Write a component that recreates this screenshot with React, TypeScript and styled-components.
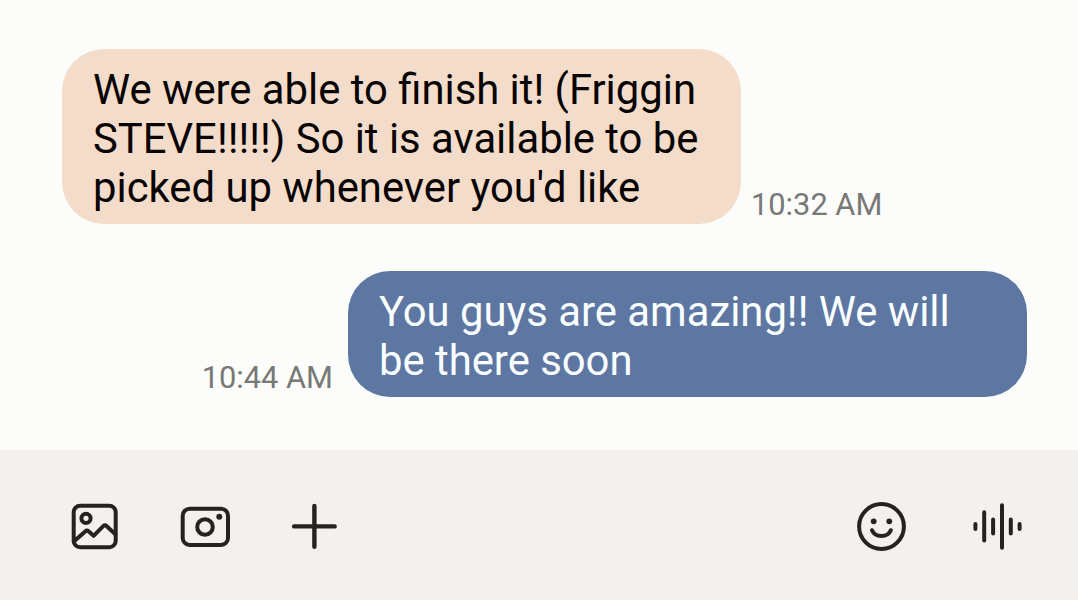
import styled, { createGlobalStyle } from 'styled-components';

type TypeMessage = {
  text: string;
  time: string;
  mine: boolean;
};

const messages: TypeMessage[] = [
  {
    text: "We were able to finish it! (Friggin STEVE!!!!!) So it is available to be picked up whenever you'd like",
    time: '10:32 AM',
    mine: false,
  },
  {
    text: 'You guys are amazing!! We will be there soon',
    time: '10:44 AM',
    mine: true,
  },
];

const ImageIcon = () => (
  <Icon viewBox="0 0 55 55">
    <rect x="6.7" y="7.7" width="42" height="41.6" rx="6.5" />
    <circle cx="19" cy="20.3" r="4.6" />
    <path d="M6.8 43.6 L18.2 33.4 Q20 31.8 21.8 33.4 L26.6 37.8 L36.2 28.2 Q38 26.4 39.8 28.2 L48.4 36.4" />
  </Icon>
);

const CameraIcon = () => (
  <Icon viewBox="0 0 55 55">
    <rect x="5.7" y="10.7" width="45.3" height="36.3" rx="7" />
    <circle cx="28" cy="29" r="7.8" />
    <Dot cx="42.3" cy="18.7" r="3" />
  </Icon>
);

const PlusIcon = () => (
  <Icon viewBox="0 0 55 55">
    <path d="M27.4 8 V48.8 M7.1 28.4 H47.7" strokeWidth="4.4" />
  </Icon>
);

const SmileIcon = () => (
  <Icon viewBox="0 0 55 55">
    <circle cx="27.5" cy="28.5" r="22.4" />
    <Dot cx="19.7" cy="23.3" r="2.9" />
    <Dot cx="35.3" cy="23.3" r="2.9" />
    <path d="M18 32.2 C21.2 39.9 33.6 39.9 36.8 32.2" />
  </Icon>
);

const VoiceIcon = () => (
  <Icon viewBox="0 0 55 55">
    <path d="M5.4 26 V31 M14.2 14.2 V42.6 M23.1 21.4 V35.6 M32 7.2 V49.8 M40.8 21.4 V35.6 M49.6 26 V31" />
  </Icon>
);

const Message = ({ text, time, mine }: TypeMessage) => {
  return (
    <Row $mine={mine}>
      <Bubble $mine={mine}>{text}</Bubble>
      <Time $mine={mine}>{time}</Time>
    </Row>
  );
};

const App = () => {
  return (
    <>
      <GlobalStyle />
      <Screen>
        <Messages>
          {messages.map((message) => (
            <Message key={message.time} {...message} />
          ))}
        </Messages>
        <Composer>
          <Actions>
            <ToolButton aria-label="Gallery">
              <ImageIcon />
            </ToolButton>
            <ToolButton aria-label="Camera">
              <CameraIcon />
            </ToolButton>
            <ToolButton aria-label="More">
              <PlusIcon />
            </ToolButton>
          </Actions>
          <Field>
            <ToolButton aria-label="Emoji">
              <SmileIcon />
            </ToolButton>
          </Field>
          <ToolButton aria-label="Voice">
            <VoiceIcon />
          </ToolButton>
        </Composer>
      </Screen>
    </>
  );
};

export default App;

const GlobalStyle = createGlobalStyle`
  * {
    box-sizing: border-box;
  }

  body {
    margin: 0;
    background-color: #fcfdfa;
    font-family: Roboto, 'Liberation Sans', sans-serif;
  }
`;

const Screen = styled.div`
  display: flex;
  flex-direction: column;
  width: 1078px;
  height: 600px;
  overflow: hidden;
`;

const Messages = styled.div`
  display: flex;
  flex: 1;
  flex-direction: column;
  gap: 47px;
  padding: 49px 51px 0 62px;
`;

const Row = styled.div<{ $mine: boolean }>`
  display: flex;
  flex-direction: ${({ $mine }) => ($mine ? 'row-reverse' : 'row')};
  align-items: flex-end;
`;

const Bubble = styled.div<{ $mine: boolean }>`
  width: 679px;
  padding: 16px 31px 12px;
  border-radius: 42px;
  background-color: ${({ $mine }) => ($mine ? '#5d77a2' : '#f4dccb')};
  color: ${({ $mine }) => ($mine ? '#fafeff' : '#080403')};
  font-size: 41.8px;
  line-height: 49px;
`;

const Time = styled.span<{ $mine: boolean }>`
  margin: ${({ $mine }) => ($mine ? '0 15px 1px 0' : '0 0 1px 10px')};
  color: #787876;
  font-size: 30.8px;
  line-height: 36px;
  white-space: nowrap;
`;

const Composer = styled.div`
  display: flex;
  align-items: center;
  height: 150px;
  padding: 26px 53px 25px 67px;
  background-color: #f4f0ed;
`;

const Actions = styled.div`
  display: flex;
  gap: 55px;
`;

const Field = styled.div`
  display: flex;
  flex: 1;
  align-items: center;
  justify-content: flex-end;
  height: 99px;
  margin: 0 37px 0 56px;
  padding-right: 24px;
  border-radius: 50px;
  background-color: #f3f0ed;
`;

const ToolButton = styled.button`
  display: flex;
  padding: 0;
  border: none;
  background: none;
`;

const Icon = styled.svg`
  width: 55px;
  height: 55px;
  fill: none;
  stroke: #252321;
  stroke-width: 4;
  stroke-linecap: round;
  stroke-linejoin: round;
`;

const Dot = styled.circle`
  fill: #252321;
  stroke: none;
`;
